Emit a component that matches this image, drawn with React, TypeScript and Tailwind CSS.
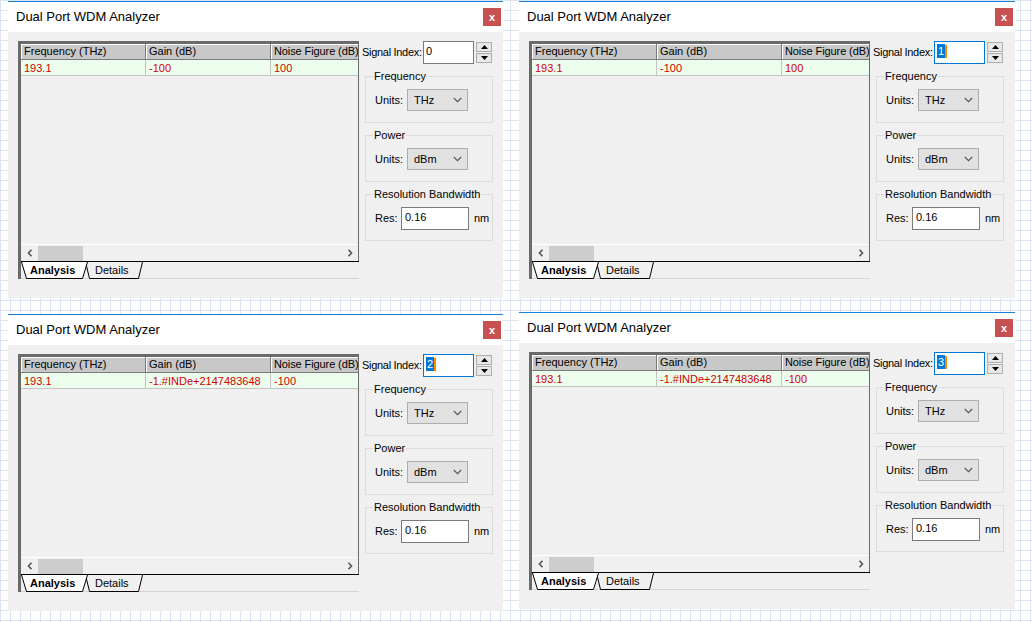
import React from 'react';

type WindowProps = {
  index: string;
  gain: string;
  noise: string;
  focused?: boolean;
  className?: string;
};

function TabStrip() {
  return (
    <div className="flex h-[18px] border-t border-black border-b border-b-[#d4d4d4]">
      <div className="relative z-10 flex h-[17px] w-[67px] items-center pl-[9px]">
        <svg className="absolute inset-0" width="67" height="17" viewBox="0 0 67 17">
          <polygon points="0.5,0 5.5,16.5 61.5,16.5 66.5,0" fill="#ffffff" />
          <polyline points="0.5,0 5.5,16.5 61.5,16.5 66.5,0" fill="none" stroke="#000" strokeWidth="1" />
        </svg>
        <span className="relative text-[11px] font-bold leading-none text-black">Analysis</span>
      </div>
      <div className="relative -ml-[3px] flex h-[17px] w-[58px] items-center pl-[10px]">
        <svg className="absolute inset-0" width="58" height="17" viewBox="0 0 58 17">
          <polyline points="0.5,0 4.5,16.5 53.5,16.5 57.5,0" fill="none" stroke="#000" strokeWidth="1" />
        </svg>
        <span className="relative text-[11px] leading-none text-black">Details</span>
      </div>
    </div>
  );
}

function Sheet({ gain, noise }: { gain: string; noise: string }) {
  const head = 'h-[16px] shrink-0 overflow-hidden whitespace-nowrap border-r border-b border-[#7a7a7a] bg-[#c8c8c8] pl-[3px] text-[11px] leading-[15px] text-black shadow-[inset_1px_1px_0_#ffffff]';
  const cell = 'h-[16px] shrink-0 overflow-hidden whitespace-nowrap border-r border-b border-[#c4c4c4] bg-[#edfded] pl-[3px] text-[11px] leading-[16px] text-[#d00000]';
  return (
    <div className="flex h-[238px] w-[341px] shrink-0 flex-col border-l-[3px] border-t-[3px] border-[#6a6a6a]">
      <div className="flex min-h-0 flex-1 flex-col border-r border-[#6a6a6a] bg-[#f0f0f0]">
        <div className="flex">
          <div className={`${head} w-[125px]`}>Frequency (THz)</div>
          <div className={`${head} w-[125px]`}>Gain (dB)</div>
          <div className={`${head} min-w-0 flex-1 border-r-0 tracking-[-0.1px]`}>Noise Figure (dB)</div>
        </div>
        <div className="flex">
          <div className={`${cell} w-[125px]`}>193.1</div>
          <div className={`${cell} w-[125px]`}>{gain}</div>
          <div className={`${cell} min-w-0 flex-1 border-r-0`}>{noise}</div>
        </div>
        <div className="flex-1" />
        <div className="flex h-[17px] items-center border-t border-white">
          <div className="flex h-full w-[17px] items-center justify-center">
            <svg width="6" height="8" viewBox="0 0 6 8">
              <path d="M4.5 0.8 L1.5 4 L4.5 7.2" fill="none" stroke="#555" strokeWidth="1.6" />
            </svg>
          </div>
          <div className="h-[15px] w-[45px] bg-[#cdcdcd]" />
          <div className="flex-1" />
          <div className="flex h-full w-[17px] items-center justify-center">
            <svg width="6" height="8" viewBox="0 0 6 8">
              <path d="M1.5 0.8 L4.5 4 L1.5 7.2" fill="none" stroke="#555" strokeWidth="1.6" />
            </svg>
          </div>
        </div>
      </div>
      <TabStrip />
    </div>
  );
}

function Select({ value }: { value: string }) {
  return (
    <div className="flex h-[22px] w-[61px] items-center justify-between border border-[#adadad] bg-[#e1e1e1] pl-[6px] pr-[5px] text-[11px] text-black">
      <span>{value}</span>
      <svg width="9" height="6" viewBox="0 0 9 6">
        <path d="M0.8 1 L4.5 4.7 L8.2 1" fill="none" stroke="#555" strokeWidth="1.1" />
      </svg>
    </div>
  );
}

function Group({ title, children, pt }: { title: string; children: React.ReactNode; pt: string }) {
  return (
    <fieldset className={`ml-[3px] mt-[6px] h-[53px] w-[128px] border border-[#dcdcdc] pl-[9px] ${pt}`}>
      <legend className="-ml-[2px] px-[1px] text-[11px] leading-[13px] text-black">{title}</legend>
      {children}
    </fieldset>
  );
}

function Panel({ index, focused }: { index: string; focused?: boolean }) {
  return (
    <div className="flex w-[131px] flex-col text-[11px] text-black">
      <div className="flex h-[23px] items-center">
        <span className="w-[61px] shrink-0 whitespace-nowrap tracking-[-0.3px]">Signal Index:</span>
        <div className={`flex h-[23px] w-[51px] shrink-0 items-start border bg-white pl-[2px] pt-[2px] leading-[14px] ${focused ? 'border-[#0078d7]' : 'border-[#7a7a7a]'}`}>
          {focused ? (
            <span className="flex items-center">
              <span className="bg-[#0078d7] px-[1px] text-white">{index}</span>
              <span className="h-[13px] w-[2px] bg-[#ff8a00]" />
            </span>
          ) : (
            <span>{index}</span>
          )}
        </div>
        <div className="ml-[2px] flex h-[21px] w-[16px] flex-col gap-px">
          <div className="flex h-[10px] items-center justify-center border border-[#adadad] bg-[#e8e8e8]">
            <svg width="7" height="4" viewBox="0 0 7 4"><polygon points="3.5,0 7,4 0,4" fill="#000" /></svg>
          </div>
          <div className="flex h-[10px] items-center justify-center border border-[#adadad] bg-[#e8e8e8]">
            <svg width="7" height="4" viewBox="0 0 7 4"><polygon points="0,0 7,0 3.5,4" fill="#000" /></svg>
          </div>
        </div>
      </div>
      <Group title="Frequency" pt="pt-[6px]">
        <div className="flex items-center">
          <span className="w-[32px] shrink-0">Units:</span>
          <Select value="THz" />
        </div>
      </Group>
      <Group title="Power" pt="pt-[6px]">
        <div className="flex items-center">
          <span className="w-[32px] shrink-0">Units:</span>
          <Select value="dBm" />
        </div>
      </Group>
      <Group title="Resolution Bandwidth" pt="pt-[6px]">
        <div className="flex items-center">
          <span className="w-[26px] shrink-0">Res:</span>
          <div className="h-[23px] w-[68px] shrink-0 border border-[#7a7a7a] bg-white pl-[3px] pt-[2px] leading-[14px]">0.16</div>
          <span className="ml-[5px]">nm</span>
        </div>
      </Group>
    </div>
  );
}

function AnalyzerWindow({ index, gain, noise, focused, className }: WindowProps) {
  return (
    <div className={`flex h-[297px] shrink-0 flex-col bg-[#f0f0f0] ${className ?? ''}`}>
      <div className="flex h-[31px] items-center justify-between border-t border-[#1883d7] bg-white pl-[8px] pr-[2px]">
        <span className="text-[13px] text-black">Dual Port WDM Analyzer</span>
        <div className="flex h-[18px] w-[18px] items-center justify-center bg-[#c75050] text-[11px] font-bold leading-none text-white">x</div>
      </div>
      <div className="flex flex-1 gap-[3px] pl-[10px] pt-[9px]">
        <Sheet gain={gain} noise={noise} />
        <Panel index={index} focused={focused} />
      </div>
    </div>
  );
}

export default function App() {
  return (
    <div className="h-[622px] w-[1032px] overflow-hidden bg-white bg-[image:linear-gradient(to_right,#dbe3f4_1px,transparent_1px),linear-gradient(to_bottom,#dbe3f4_1px,transparent_1px)] bg-[size:10px_10px] pl-[8px] pt-[1px] font-['Liberation_Sans',Arial,sans-serif]">
      <div className="flex gap-[16px]">
        <AnalyzerWindow className="w-[495px]" index="0" gain="-100" noise="100" />
        <AnalyzerWindow className="w-[496px]" index="1" gain="-100" noise="100" focused />
      </div>
      <div className="mt-[14px] flex items-start gap-[16px]">
        <AnalyzerWindow className="mt-[2px] w-[495px]" index="2" gain="-1.#INDe+2147483648" noise="-100" focused />
        <AnalyzerWindow className="w-[496px]" index="3" gain="-1.#INDe+2147483648" noise="-100" focused />
      </div>
    </div>
  );
}
